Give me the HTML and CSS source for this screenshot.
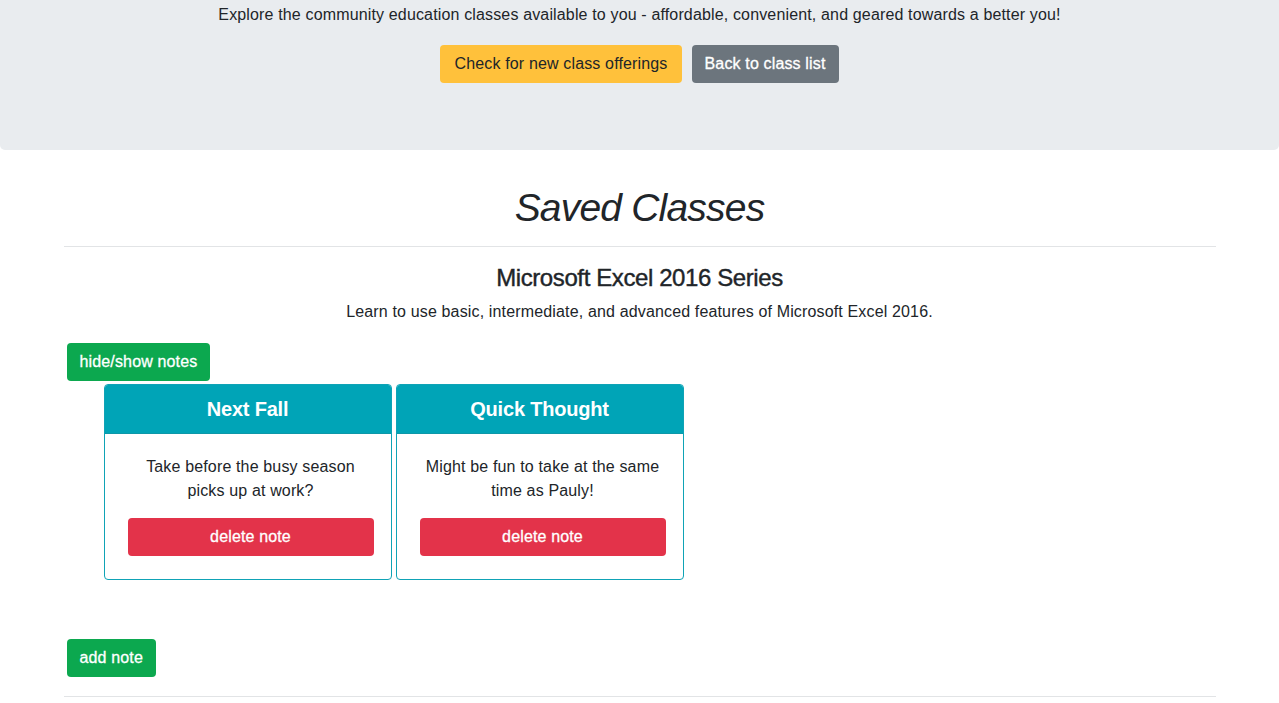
FILE: index.html
```html
<!DOCTYPE html>
<html lang="en">
<head>
<meta charset="utf-8">
<title>Saved Classes</title>
<link rel="stylesheet" href="styles.css">
</head>
<body>
<header class="jumbotron">
  <p class="intro">Explore the community education classes available to you - affordable, convenient, and geared towards a better you!</p>
  <div class="hero-actions">
    <button class="btn btn-warning">Check for new class offerings</button>
    <button class="btn btn-secondary">Back to class list</button>
  </div>
</header>
<main class="container">
  <h1 class="page-title">Saved Classes</h1>
  <hr class="rule">
  <section class="saved-class">
    <h3 class="class-name">Microsoft Excel 2016 Series</h3>
    <p class="class-desc">Learn to use basic, intermediate, and advanced features of Microsoft Excel 2016.</p>
    <button class="btn btn-success toggle">hide/show notes</button>
    <div class="notes">
      <div class="note-card">
        <div class="note-header">Next Fall</div>
        <div class="note-body">
          <p class="note-text">Take before the busy season picks up at work?</p>
          <button class="btn btn-danger delete">delete note</button>
        </div>
      </div>
      <div class="note-card">
        <div class="note-header">Quick Thought</div>
        <div class="note-body">
          <p class="note-text">Might be fun to take at the same time as Pauly!</p>
          <button class="btn btn-danger delete">delete note</button>
        </div>
      </div>
    </div>
    <button class="btn btn-success add">add note</button>
  </section>
  <hr class="rule bottom">
</main>
</body>
</html>
```
FILE: styles.css
```css
* { box-sizing: border-box; }
html, body { margin: 0; padding: 0; }
body {
  font-family: "Liberation Sans", Arial, sans-serif;
  font-size: 16px;
  line-height: 1.5;
  letter-spacing: 0.15px;
  color: #212529;
  background: #fff;
}
.jumbotron {
  background: #e9ecef;
  border-radius: 0 0 5px 5px;
  padding: 3px 32px 67px;
  text-align: center;
}
.intro { margin: 0; }
.hero-actions {
  margin-top: 18px;
  display: flex;
  justify-content: center;
  gap: 10px;
}
.btn {
  display: inline-block;
  font-family: inherit;
  font-size: 16px;
  line-height: 24px;
  letter-spacing: 0.15px;
  padding: 7px 13px;
  border: 0;
  border-radius: 4px;
  cursor: pointer;
  color: #fff;
  -webkit-text-stroke: 0.3px currentColor;
}
.btn-warning { background: #ffc13b; color: #212529; -webkit-text-stroke: 0; padding: 7px 14px; }
.btn-secondary { background: #6c757d; }
.btn-success { background: #0ca84f; }
.btn-danger { background: #e3334a; }
.container {
  width: 1152px;
  margin: 0 auto;
}
.page-title {
  margin: 34px 0 0;
  font-size: 39px;
  font-style: italic;
  font-weight: 400;
  letter-spacing: -0.8px;
  line-height: 48px;
  text-align: center;
}
.rule {
  border: 0;
  border-top: 1px solid #e2e4e6;
  margin: 14px 0 0;
}
.class-name {
  margin: 16px 0 0;
  font-size: 24px;
  font-weight: 400;
  letter-spacing: -0.4px;
  -webkit-text-stroke: 0.4px currentColor;
  line-height: 29px;
  text-align: center;
}
.class-desc {
  margin: 8px 0 0;
  text-align: center;
}
.toggle, .add { margin-left: 3px; }
.toggle { margin-top: 19px; }
.notes {
  display: flex;
  gap: 4px;
  margin: 3px 0 0 40px;
}
.note-card {
  width: 288px;
  border: 1px solid #0fa3b6;
  border-radius: 4px;
  overflow: hidden;
  text-align: center;
}
.note-header {
  background: #00a4b7;
  color: #fff;
  font-size: 20px;
  font-weight: 700;
  letter-spacing: -0.2px;
  line-height: 24px;
  padding: 12px 20px;
  border-bottom: 1px solid #0e97a8;
}
.note-body {
  padding: 21px 17px 23px 23px;
}
.note-text { margin: 0 0 15px; }
.delete { width: 100%; }
.add { margin-top: 59px; }
.rule.bottom { margin-top: 19px; }
```
